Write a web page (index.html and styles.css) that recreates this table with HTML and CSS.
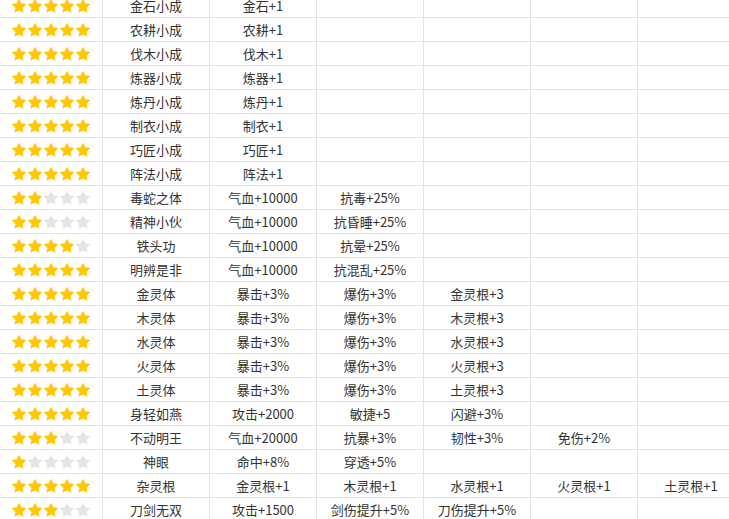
FILE: index.html
```html
<!DOCTYPE html>
<html lang="zh">
<head>
<meta charset="utf-8">
<link rel="stylesheet" href="styles.css">
</head>
<body>
<svg width="0" height="0" class="defs">
  <defs>
    <symbol id="star" viewBox="0 0 16 16">
      <polygon points="8,0.7 10.29,5.34 15.42,6.09 11.71,9.71 12.58,14.81 8,12.4 3.42,14.81 4.29,9.71 0.58,6.09 5.71,5.34"/>
    </symbol>
  </defs>
</svg>
<table class="grid" id="grid">
  <colgroup>
    <col class="c0"><col class="c"><col class="c"><col class="c"><col class="c"><col class="c"><col class="c">
  </colgroup>
  <tbody id="rows"></tbody>
</table>
<script src="app.js"></script>
</body>
</html>
```
FILE: styles.css
```css
html, body {
  margin: 0;
  padding: 0;
  background: #fff;
  overflow: hidden;
}
.defs { position: absolute; }
.grid {
  border-collapse: collapse;
  table-layout: fixed;
  width: 746px;
  margin: -7px 0 0 -1px;
  font-family: "Noto Sans CJK SC", "Noto Sans", sans-serif;
  font-size: 13px;
  color: #333;
}
.c0 { width: 103px; }
.c { width: 107px; }
.grid tr { height: 24px; }
.grid td {
  border: 1px solid #e2e2e2;
  padding: 0;
  text-align: center;
  vertical-align: middle;
  white-space: nowrap;
  line-height: 22px;
  overflow: hidden;
}
.stars {
  display: flex;
  justify-content: center;
  align-items: center;
  height: 22px;
}
.stars svg {
  width: 16px;
  height: 16px;
  display: block;
}
.on { fill: #ffc800; }
.off { fill: #e3e4e6; }
```
FILE: app.js
```js
const data = [
  [5, "金石小成", "金石+1"],
  [5, "农耕小成", "农耕+1"],
  [5, "伐木小成", "伐木+1"],
  [5, "炼器小成", "炼器+1"],
  [5, "炼丹小成", "炼丹+1"],
  [5, "制衣小成", "制衣+1"],
  [5, "巧匠小成", "巧匠+1"],
  [5, "阵法小成", "阵法+1"],
  [2, "毒蛇之体", "气血+10000", "抗毒+25%"],
  [2, "精神小伙", "气血+10000", "抗昏睡+25%"],
  [4, "铁头功", "气血+10000", "抗晕+25%"],
  [5, "明辨是非", "气血+10000", "抗混乱+25%"],
  [5, "金灵体", "暴击+3%", "爆伤+3%", "金灵根+3"],
  [5, "木灵体", "暴击+3%", "爆伤+3%", "木灵根+3"],
  [5, "水灵体", "暴击+3%", "爆伤+3%", "水灵根+3"],
  [5, "火灵体", "暴击+3%", "爆伤+3%", "火灵根+3"],
  [5, "土灵体", "暴击+3%", "爆伤+3%", "土灵根+3"],
  [5, "身轻如燕", "攻击+2000", "敏捷+5", "闪避+3%"],
  [3, "不动明王", "气血+20000", "抗暴+3%", "韧性+3%", "免伤+2%"],
  [1, "神眼", "命中+8%", "穿透+5%"],
  [5, "杂灵根", "金灵根+1", "木灵根+1", "水灵根+1", "火灵根+1", "土灵根+1"],
  [3, "刀剑无双", "攻击+1500", "剑伤提升+5%", "刀伤提升+5%"]
];
const tbody = document.getElementById("rows");
let html = "";
for (const row of data) {
  const n = row[0];
  let stars = "";
  for (let i = 0; i < 5; i++) {
    stars += '<svg class="' + (i < n ? "on" : "off") + '"><use href="#star"/></svg>';
  }
  html += '<tr><td><div class="stars">' + stars + "</div></td>";
  for (let c = 1; c <= 6; c++) {
    html += "<td>" + (row[c] || "") + "</td>";
  }
  html += "</tr>";
}
tbody.innerHTML = html;
```
